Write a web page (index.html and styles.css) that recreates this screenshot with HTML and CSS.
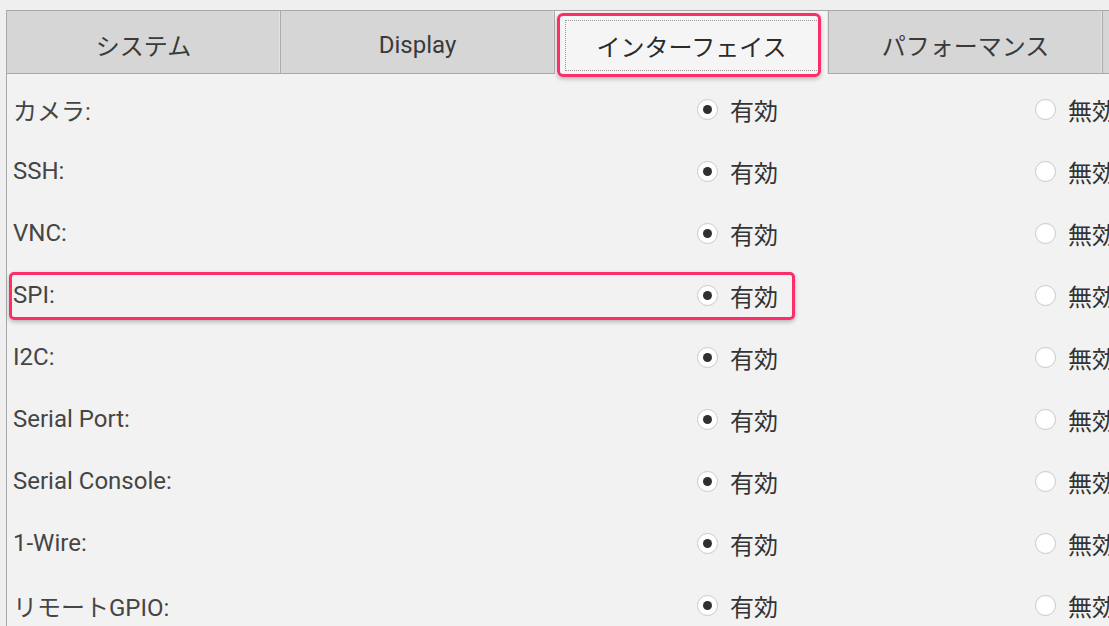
FILE: index.html
```html
<!DOCTYPE html>
<html lang="ja">
<head>
  <meta charset="UTF-8">
  <title>Raspberry Pi の設定</title>
  <link rel="stylesheet" href="styles.css">
</head>
<body>

<div class="window">
  <div class="tabs">
    <div class="tab">システム</div>
    <div class="tab">Display</div>
    <div class="tab active">
      <span class="focus">インターフェイス</span>
      <span class="mark mark-tab"></span>
    </div>
    <div class="tab">パフォーマンス</div>
    <div class="tab">ローカライゼーション</div>
  </div>

  <div class="panel">
    <div class="row">
      <span class="label">カメラ:</span>
      <label class="opt"><input type="radio" name="camera" checked> 有効</label>
      <label class="opt"><input type="radio" name="camera"> 無効</label>
    </div>
    <div class="row">
      <span class="label">SSH:</span>
      <label class="opt"><input type="radio" name="ssh" checked> 有効</label>
      <label class="opt"><input type="radio" name="ssh"> 無効</label>
    </div>
    <div class="row">
      <span class="label">VNC:</span>
      <label class="opt"><input type="radio" name="vnc" checked> 有効</label>
      <label class="opt"><input type="radio" name="vnc"> 無効</label>
    </div>
    <div class="row">
      <span class="label">SPI:</span>
      <label class="opt"><input type="radio" name="spi" checked> 有効</label>
      <label class="opt"><input type="radio" name="spi"> 無効</label>
      <span class="mark mark-row"></span>
    </div>
    <div class="row">
      <span class="label">I2C:</span>
      <label class="opt"><input type="radio" name="i2c" checked> 有効</label>
      <label class="opt"><input type="radio" name="i2c"> 無効</label>
    </div>
    <div class="row">
      <span class="label">Serial Port:</span>
      <label class="opt"><input type="radio" name="serial" checked> 有効</label>
      <label class="opt"><input type="radio" name="serial"> 無効</label>
    </div>
    <div class="row">
      <span class="label">Serial Console:</span>
      <label class="opt"><input type="radio" name="console" checked> 有効</label>
      <label class="opt"><input type="radio" name="console"> 無効</label>
    </div>
    <div class="row">
      <span class="label">1-Wire:</span>
      <label class="opt"><input type="radio" name="onewire" checked> 有効</label>
      <label class="opt"><input type="radio" name="onewire"> 無効</label>
    </div>
    <div class="row">
      <span class="label">リモートGPIO:</span>
      <label class="opt"><input type="radio" name="gpio" checked> 有効</label>
      <label class="opt"><input type="radio" name="gpio"> 無効</label>
    </div>
  </div>
</div>

</body>
</html>
```

FILE: styles.css
```css
html, body { margin: 0; height: 100%; overflow: hidden; }
body {
  background: #efefef;
  font-family: Roboto, "Noto Sans CJK JP", sans-serif;
  font-size: 24px;
  color: #333;
}
.window {
  margin: 10px 0 0 6px;
  border-left: 1px solid #a9a9a9;
  width: 1300px;
  background: #f2f2f2;
  height: 700px;
}

/* tab strip */
.tabs {
  display: flex;
  border-top: 1px solid #a9a9a9;
  border-bottom: 1px solid #a9a9a9;
  background: #d6d6d6;
  height: 62px;
}
.tab {
  flex: 0 0 273px;
  border-right: 1px solid #ababab;
  box-shadow: inset -1px 0 0 #e2e2e2;
  display: flex;
  align-items: center;
  justify-content: center;
  padding-top: 5px;
  color: #3a3a3a;
  white-space: nowrap;
  overflow: hidden;
  position: relative;
}
.tab.active {
  background: #f5f5f5;
  margin-bottom: -1px;
  padding-top: 0;
  overflow: visible;
  z-index: 1;
}
.focus {
  display: flex;
  align-items: center;
  justify-content: center;
  width: 252px;
  height: 49px;
  border: 1px dotted #9a9a9a;
  margin-top: 6px;
  color: #2b2b2b;
}

/* annotation marks */
.mark {
  position: absolute;
  border: 3px solid #fb2e6a;
  border-radius: 6px;
  box-shadow: 0 2px 4px rgba(0, 0, 0, 0.25);
  pointer-events: none;
  z-index: 2;
}
.mark-tab { left: 2px; top: 2px; width: 258px; height: 58px; }
.mark-row { left: -4px; top: 8px; width: 780px; height: 42px; border-radius: 5px; }

/* interface rows */
.panel { padding: 4px 0 0 6px; }
.row {
  position: relative;
  display: grid;
  grid-template-columns: 684px 338px 1fr;
  align-items: center;
  height: 62px;
}
.label { color: #454545; }
.opt {
  display: flex;
  align-items: center;
  gap: 12px;
  color: #333;
  white-space: nowrap;
}
.opt input {
  appearance: none;
  -webkit-appearance: none;
  margin: 0;
  width: 21px;
  height: 21px;
  border-radius: 50%;
  border: 1px solid #c9c9c9;
  background: #fff;
  display: grid;
  place-content: center;
}
.opt input:checked::before {
  content: "";
  width: 9px;
  height: 9px;
  border-radius: 50%;
  background: #303030;
}
```
